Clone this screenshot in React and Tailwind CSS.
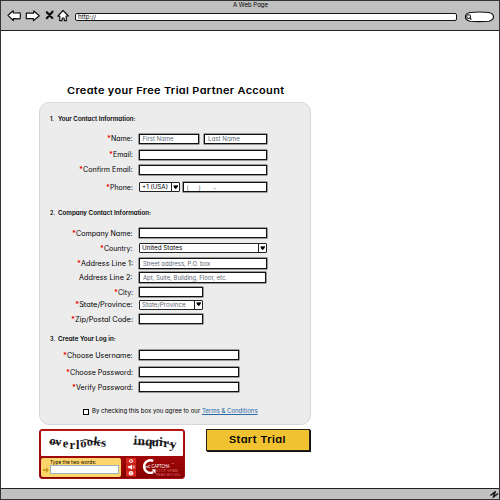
import { useLayoutEffect, useRef, useState } from "react";

// A single line of text stretched to a given width, like wide marker lettering.
function Fit({ w, children, className = "" }) {
  const ref = useRef(null);
  const [scale, setScale] = useState(1);
  useLayoutEffect(() => {
    const measure = () => setScale(w / ref.current.offsetWidth);
    measure();
    document.fonts.ready.then(measure);
  }, [w]);
  return (
    <span className="block shrink-0 whitespace-nowrap" style={{ width: w }}>
      <span ref={ref} className={`inline-block origin-left ${className}`} style={{ transform: `scaleX(${scale})` }}>
        {children}
      </span>
    </span>
  );
}

const sketch = "border border-[#111] bg-white shadow-[0_0_0_0.4px_#222]";

function Box({ size, children }) {
  return <div className={`flex shrink-0 items-center pt-px pl-[2.5px] text-[6px] leading-none text-[#5d6975] ${sketch} ${size}`}>{children}</div>;
}

function Select({ size, children, dark }) {
  return (
    <div className={`flex shrink-0 items-center justify-between rounded-[1px] pl-0.5 text-[6px] leading-none ${dark ? "text-black" : "text-[#5d6975]"} border border-[#222] bg-white ${size}`}>
      {children}
      <span className="flex h-full w-[8.5px] items-center justify-center border-l border-[#222]">
        <svg viewBox="0 0 6 5" className="h-[4.5px] w-[5.5px]"><path d="M.3.5 5.7.4 5 2.2 3 4.7 1 2.4Z" /></svg>
      </span>
    </div>
  );
}

function Row({ label, w, pos, required = true, children }) {
  return (
    <div className={`flex items-center ${pos}`}>
      <div className="mr-[6px] flex w-[93px] shrink-0 items-center justify-end text-[7px] leading-none">
        <Fit w={w}>{required && <span className="font-bold text-[#f00000]">*</span>}{label}</Fit>
      </div>
      <div className="flex">{children}</div>
    </div>
  );
}

function Section({ n, title, w, pos }) {
  return (
    <div className={`flex h-2 items-center pt-px pl-[10px] text-[5.5px] leading-none font-semibold ${pos}`}>
      <span className="w-[8px]">{n}.</span>
      <Fit w={w}>{title}</Fit>
    </div>
  );
}

function Toolbar() {
  return (
    <header className="flex h-[30px] flex-col border-b-[1.5px] border-[#222] bg-[#c0c0c0]">
      <div className="flex h-[9px] items-center pt-px pl-[232px] text-[5.5px] leading-none"><Fit w={35}>A Web Page</Fit></div>
      <div className="flex h-3 items-center">
        <svg viewBox="0 0 76 14" className="h-[14px] w-[76px] shrink-0" fill="#fff" stroke="#111" strokeWidth="1.2" strokeLinejoin="round" strokeLinecap="round">
          <path d="M7 6.3 12.2 1.8 12.4 4 19 3.8Q20 6 19 9.8L12.2 9.7 12.3 11.7Z" />
          <path d="M38.3 6.8 32.8 2 32.5 4.2 25.4 4.2 25.2 9.6 32.4 9.6 32.4 11.7Z" />
          <path d="M45.8 3.2 51.3 8.9M51.5 2.7 45.8 9.2" strokeWidth="2.2" />
          <path d="M56.8 7.2 62 1.5 67.4 7 65.2 7.2 65.4 11.7 63.4 11.7 63 9 61.3 9 61 11.6 58.7 11.6 58.8 7.2Z" />
        </svg>
        <div className="mt-[2px] -ml-[2px] flex h-[8.5px] w-[382px] items-center rounded-[2px] border-[1.5px] border-[#151515] bg-white pl-0.5 text-[6px] leading-none">
          <Fit w={18}>http://</Fit>
        </div>
        <svg viewBox="0 0 30 12" className="mt-[2px] ml-[7px] h-3 w-[30px]" fill="#fff" stroke="#111" strokeWidth="1.1">
          <path d="M6 1.5Q15 .5 25 1.5C31 3 31 8.5 25 10.2Q15 11 6 10.2C-.5 8.5 .2 2.7 6 1.5Z" />
          <circle cx="4.6" cy="5.6" r="1.9" /><path d="m6 7 1.4 1.5" />
        </svg>
      </div>
    </header>
  );
}

function Captcha() {
  return (
    <div className="flex h-[50px] w-[146px] flex-col rounded-[3px] border border-[#a31212] bg-linear-to-b from-[#c31616] to-[#850000] p-px">
      <svg viewBox="0 0 142 25" preserveAspectRatio="none" className="h-[25px] w-full rounded-[1px] bg-white" fill="#151515" fontFamily="Liberation Serif, serif" fontWeight="bold">
        <text x="8 14 21.5 28.5 35 39.5 46 52 60" y="13.5 14.5 16 17.5 17.5 16.5 15 14 15.5" rotate="8 3 5 0 0 -4 -5 8 5" fontSize="12.5">overlooks</text>
        <path d="M8 11Q13 13 20 12M39 10Q45 7 50 10L63 12.5" fill="none" stroke="#151515" strokeWidth=".9" />
        <text x="92.5 96.5 104 110.5 118 122 128.5" y="13.5 14 14.5 15 15 16 17" rotate="2 3 4 3 2 3 7" fontSize="13">inquiry</text>
        <path d="M92 13 109 13 117 9 134 15" fill="none" stroke="#151515" strokeWidth=".9" />
      </svg>
      <div className="mt-[2px] flex h-[19px]">
        <div className="flex h-[19px] w-[80px] shrink-0 flex-col rounded-[2px] bg-[#ffd66b] pt-[1px] pl-[9px] text-[5px] leading-[6px]">
          <Fit w={46}>Type the two words:</Fit>
          <div className="flex items-center">
            <svg viewBox="0 0 6 6" className="-ml-[7px] mr-px h-[6px] w-[6px] shrink-0"><path d="M0 2h3V0l3 3-3 3V4H0Z" fill="#c99825" /></svg>
            <div className="h-[9px] w-[69px] shrink-0 border border-[#9ab0bd] bg-white" />
          </div>
        </div>
        <svg viewBox="0 0 62 19" className="h-[19px] w-[62px] shrink-0" fill="#fff">
          <path d="M5 0h10v18.5h-10Z" fill="#d92b20" />
          <path d="M5 6h10M5 12h10" stroke="#9d0909" strokeWidth=".7" />
          <path d="M8 3.2Q10 .2 12 2.6M12.2 3.2Q10 5.7 8 3.5" fill="none" stroke="#fff" strokeWidth="1" />
          <path d="M7.3 8h1.8l2-1.3v5l-2-1.5H7.3ZM12.5 7.6h.8v3h-.8Z" />
          <circle cx="10" cy="15.3" r="2.2" /><path d="M10 14v2.6" stroke="#d92b20" strokeWidth=".7" />
          <path d="M32.2 2.9A6.3 6.3 0 1 0 32.2 14.2" fill="none" stroke="#fff" strokeWidth="2.4" />
          <path d="m30.6 11.4 4-.1-.1 4.4Z" />
          <g fontFamily="Liberation Sans, sans-serif">
            <text x="24" y="9.5" fontSize="3.3" fontWeight="bold" textLength="5.5">reC</text>
            <text x="30.5" y="9.6" fontSize="4.8" textLength="18" lengthAdjust="spacingAndGlyphs">CAPTCHA</text>
            <text x="50.5" y="7.2" fontSize="2.4">™</text>
            <g fill="#d76761" fontSize="3.3">
              <text x="35" y="14" textLength="23" lengthAdjust="spacingAndGlyphs">STOP SPAM.</text>
              <text x="35" y="17.8" textLength="25" lengthAdjust="spacingAndGlyphs">READ BOOKS.</text>
            </g>
          </g>
        </svg>
      </div>
    </div>
  );
}

export default function App() {
  return (
    <div className="flex h-[500px] w-[500px] flex-col overflow-hidden border-[1.5px] border-[#333] bg-white text-black [font-family:Inter,'DejaVu_Sans',sans-serif] [font-feature-settings:'cv11']">
      <Toolbar />
      <main className="flex grow flex-col items-start pl-[38px]">
        <h1 className="mt-[53px] flex h-[14px] items-center pl-[28px] text-[9.5px] leading-none font-semibold"><Fit w={217} className="tracking-[0.03em]">Create your Free Trial Partner Account</Fit></h1>
        <form className="mt-[4px] flex h-[323px] w-[272px] flex-col rounded-[10px] border border-[#d7d7d7] bg-[#ececec]">
          <Section n="1" title="Your Contact Information:" w={77.5} pos="mt-[12px]" />
          <Row label="Name:" w={26} pos="mt-[10px] h-[11px]">
            <Box size="mr-[5px] h-[10px] w-[60px]"><Fit w={31}>First Name</Fit></Box>
            <Box size="h-[10px] w-[63px]"><Fit w={32}>Last Name</Fit></Box>
          </Row>
          <Row label="Email:" w={24} pos="mt-[5px] h-[11px]"><Box size="h-[10px] w-[128px]" /></Row>
          <Row label="Confirm Email:" w={54} pos="mt-[4px] h-[11px]"><Box size="h-[10px] w-[128px]" /></Row>
          <Row label="Phone:" w={27} pos="mt-[6.5px] h-[11px]">
            <Select dark size="mr-[3px] h-[10px] w-[41px]"><Fit w={26}>+1 (USA)</Fit></Select>
            <Box size="h-[10px] w-[84px]"><span className="w-[12px]">(</span><span className="w-[15px]">)</span><span>-</span></Box>
          </Row>
          <Section n="2" title="Company Contact Information:" w={92.5} pos="mt-[16.5px]" />
          <Row label="Company Name:" w={61} pos="mt-[11px] h-[10px]"><Box size="h-[10px] w-[128px]" /></Row>
          <Row label="Country:" w={33} pos="mt-[5px] h-[10px]"><Select dark size="h-[10px] w-[128px]"><Fit w={40}>United States</Fit></Select></Row>
          <Row label="Address Line 1:" w={56} pos="mt-[5.5px] h-[10px]"><Box size="h-[10.5px] w-[128px]"><Fit w={67}>Street address, P.O. box</Fit></Box></Row>
          <Row label="Address Line 2:" w={54} required={false} pos="mt-[4px] h-[10px]"><Box size="h-[10.5px] w-[127px]"><Fit w={84}>Apt, Suite, Building, Floor, etc.</Fit></Box></Row>
          <Row label="City:" w={19} pos="mt-[4.5px] h-[10px]"><Box size="h-[10px] w-[64px]" /></Row>
          <Row label="State/Province:" w={58} pos="mt-[2.5px] h-[10px]"><Select size="h-[10px] w-[64px]"><Fit w={44}>State/Province</Fit></Select></Row>
          <Row label="Zip/Postal Code:" w={62} pos="mt-[4.5px] h-[10px]"><Box size="h-[10px] w-[64px]" /></Row>
          <Section n="3" title="Create Your Log in:" w={58} pos="mt-[11px]" />
          <Row label="Choose Username:" w={70} pos="mt-[7px] h-[10px]"><Box size="h-[10px] w-[100px]" /></Row>
          <Row label="Choose Password:" w={67} pos="mt-[7px] h-[10px]"><Box size="h-[10px] w-[100px]" /></Row>
          <Row label="Verify Password:" w={61} pos="mt-[5px] h-[10px]"><Box size="h-[10px] w-[100px]" /></Row>
          <label className="mt-[16px] flex h-[8px] items-center pl-[43px] text-[5.5px] leading-none">
            <span className="mr-[3px] size-[6px] border border-black bg-white" />
            <Fit w={166}>By checking this box you agree to our <a className="text-[#286aa8] underline">Terms &amp; Conditions</a></Fit>
          </label>
        </form>
        <div className="mt-1 flex items-start">
          <Captcha />
          <button className="ml-[21px] flex h-[22px] w-[104px] items-center border border-[#252015] bg-[#f1c232] pl-[22px] text-left text-[9.5px] leading-none font-semibold shadow-[1px_1px_0_0_#111]"><Fit w={57} className="tracking-[0.03em]">Start Trial</Fit></button>
        </div>
      </main>
      <footer className="flex h-[11px] shrink-0 items-center justify-end border-t-[1.5px] border-[#222] bg-[#c0c0c0]">
        <svg viewBox="0 0 9 7" className="h-[7px] w-[9px]" fill="none" stroke="#111" strokeWidth="1.5"><path d="M.5 4.5 5 1 3.6 5.8 8 2.5" /></svg>
      </footer>
    </div>
  );
}
